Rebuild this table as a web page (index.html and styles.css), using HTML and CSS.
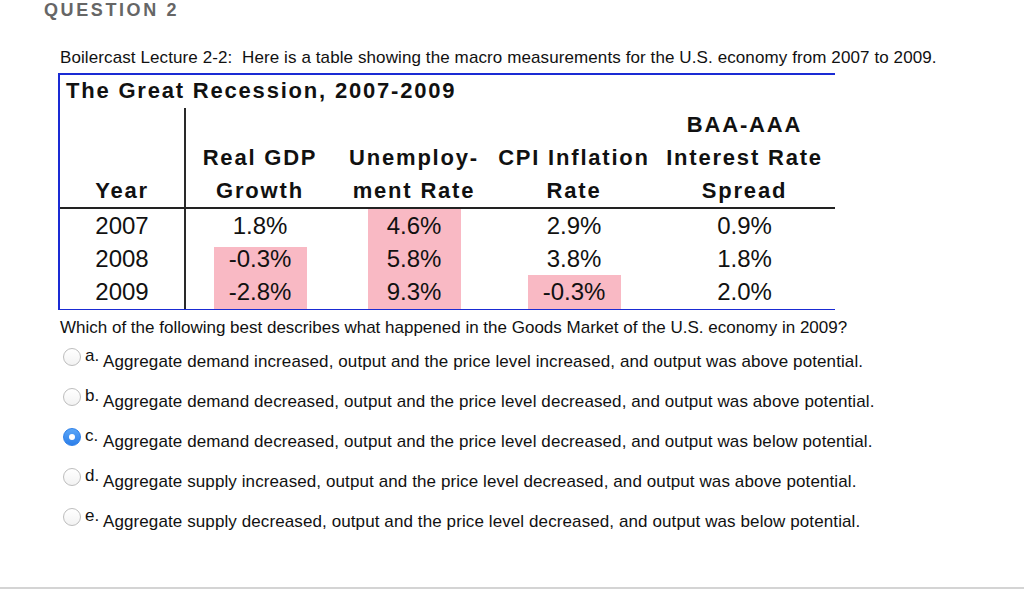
FILE: index.html
```html
<!DOCTYPE html>
<html>
<head>
<meta charset="utf-8">
<link rel="stylesheet" href="styles.css">
</head>
<body>
<div class="content">
  <h2 class="qtitle">QUESTION 2</h2>
  <p class="intro">Boilercast Lecture 2-2:&nbsp; Here is a table showing the macro measurements for the U.S. economy from 2007 to 2009.</p>
  <div class="chart">
    <div class="chart-title">The Great Recession, 2007-2009</div>
    <div class="grid">
      <div class="h first">Year</div>
      <div class="h">Real GDP<br>Growth</div>
      <div class="h">Unemploy-<br>ment Rate</div>
      <div class="h">CPI Inflation<br>Rate</div>
      <div class="h">BAA-AAA<br>Interest Rate<br>Spread</div>

      <div class="d first">2007</div>
      <div class="d">1.8%</div>
      <div class="d"><span class="pink">4.6%</span></div>
      <div class="d">2.9%</div>
      <div class="d">0.9%</div>

      <div class="d first">2008</div>
      <div class="d"><span class="pink start-low">-0.3%</span></div>
      <div class="d"><span class="pink">5.8%</span></div>
      <div class="d">3.8%</div>
      <div class="d">1.8%</div>

      <div class="d first">2009</div>
      <div class="d"><span class="pink">-2.8%</span></div>
      <div class="d"><span class="pink">9.3%</span></div>
      <div class="d"><span class="pink">-0.3%</span></div>
      <div class="d">2.0%</div>
    </div>
  </div>
  <p class="prompt">Which of the following best describes what happened in the Goods Market of the U.S. economy in 2009?</p>
  <div class="options">
    <div class="option">
      <span class="radio"></span>
      <span class="letter">a.</span>
      <span class="text">Aggregate demand increased, output and the price level increased, and output was above potential.</span>
    </div>
    <div class="option">
      <span class="radio"></span>
      <span class="letter">b.</span>
      <span class="text">Aggregate demand decreased, output and the price level decreased, and output was above potential.</span>
    </div>
    <div class="option">
      <span class="radio checked"></span>
      <span class="letter">c.</span>
      <span class="text">Aggregate demand decreased, output and the price level decreased, and output was below potential.</span>
    </div>
    <div class="option">
      <span class="radio"></span>
      <span class="letter">d.</span>
      <span class="text">Aggregate supply increased, output and the price level decreased, and output was above potential.</span>
    </div>
    <div class="option">
      <span class="radio"></span>
      <span class="letter">e.</span>
      <span class="text">Aggregate supply decreased, output and the price level decreased, and output was below potential.</span>
    </div>
  </div>
</div>
<div class="footer-line"></div>
</body>
</html>
```

FILE: styles.css
```css
html, body {
  margin: 0;
  padding: 0;
  background: #fff;
}

body {
  height: 590px;
  display: flex;
  flex-direction: column;
  font-family: "Liberation Sans", Arial, sans-serif;
  color: #111;
  overflow: hidden;
}

.content {
  flex: 1;
}

.qtitle {
  margin: 0;
  padding-left: 44px;
  font-size: 18px;
  line-height: 20px;
  font-weight: bold;
  color: #666;
  letter-spacing: 2.6px;
}

.intro {
  margin: 29px 0 0 60px;
  font-size: 17px;
  line-height: 18px;
  letter-spacing: 0.1px;
}

.chart {
  margin: 6px 0 0 58px;
  width: 777px;
  box-sizing: border-box;
  border-left: 2px solid #1a2bd4;
  border-top: 2px solid #1a2bd4;
  border-bottom: 1px solid #1a2bd4;
  color: #111;
}

.chart-title {
  padding: 0 0 2px 6px;
  font-size: 22px;
  line-height: 31px;
  font-weight: bold;
  letter-spacing: 1.8px;
}

.grid {
  display: grid;
  grid-template-columns: 126px 148px 160px 160px 181px;
  grid-template-rows: 101px 33px 33px 34px;
}

.h {
  box-sizing: border-box;
  display: flex;
  flex-direction: column;
  justify-content: flex-end;
  text-align: center;
  font-size: 22px;
  line-height: 33px;
  font-weight: bold;
  letter-spacing: 1.8px;
  border-bottom: 2px solid #222;
}

.first {
  box-sizing: border-box;
  border-right: 2px solid #2a2a2a;
}

.d {
  display: flex;
  justify-content: center;
  font-size: 24px;
  line-height: 33px;
  text-align: center;
}

.pink {
  display: block;
  width: 93px;
  height: 100%;
  background: #f9b9c4;
}

.pink.start-low {
  background: linear-gradient(to bottom, transparent 5px, #f9b9c4 5px);
}

.prompt {
  margin: 9px 0 0 60px;
  font-size: 17px;
  line-height: 18px;
}

.options {
  margin-top: 9px;
  padding-left: 63px;
}

.option {
  display: flex;
  align-items: flex-start;
  height: 40px;
  font-size: 17px;
  line-height: 18px;
}

.radio {
  box-sizing: border-box;
  width: 18px;
  height: 18px;
  margin-top: 2px;
  margin-right: 4px;
  border-radius: 50%;
  border: 1px solid #bdbdbd;
  background: linear-gradient(#ffffff, #f2f2f2);
  display: flex;
  align-items: center;
  justify-content: center;
}

.radio.checked {
  border-color: #2f80e8;
  background: linear-gradient(#5aa6f8, #2c7ee9);
}

.radio.checked::after {
  content: "";
  width: 6px;
  height: 6px;
  border-radius: 50%;
  background: #fff;
}

.letter {
  width: 18px;
  padding-top: 1px;
}

.text {
  padding-top: 7px;
  letter-spacing: 0.1px;
}

.footer-line {
  height: 2px;
  margin-bottom: 1px;
  background: #d4d4d4;
}
```
